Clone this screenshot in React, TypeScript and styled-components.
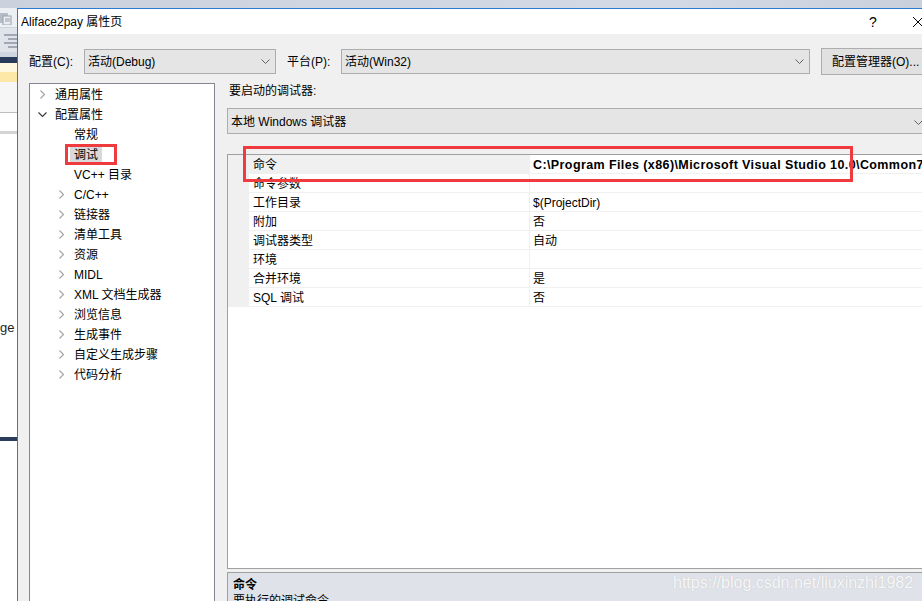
import React from 'react';
import styled, { createGlobalStyle } from 'styled-components';

const GlobalStyle = createGlobalStyle`
  * { box-sizing: border-box; }
  html, body {
    margin: 0;
    padding: 0;
    width: 922px;
    height: 601px;
    overflow: hidden;
    background: #ffffff;
  }
  body {
    font-family: "Liberation Sans", "Noto Sans CJK SC", sans-serif;
    font-size: 12px;
    color: #000;
  }
`;

const Page = styled.div`
  display: grid;
  grid-template-columns: 17px 924px;
  grid-template-rows: 8px 593px;
  width: 922px;
  height: 601px;
  overflow: hidden;
`;

const TopBand = styled.div`
  grid-column: 1 / -1;
  background: linear-gradient(to right, #cbd2de, #d4dae5 70%, #c9d0dc);
`;

/* ---- VS window peeking out on the left ---- */

const LeftStrip = styled.div`
  display: flex;
  flex-direction: column;
  overflow: hidden;
  background: #fff;
`;

const Band = styled.div<{ $h: number; $bg: string }>`
  flex-shrink: 0;
  height: ${(p) => p.$h}px;
  background: ${(p) => p.$bg};
  display: flex;
  align-items: center;
  overflow: hidden;
`;

const StripText = styled.span`
  font-family: "Liberation Sans", sans-serif;
  font-size: 13px;
  line-height: 14px;
  color: #1e1e1e;
`;

/* ---- dialog ---- */

const Dialog = styled.div`
  display: flex;
  flex-direction: column;
  border-top: 1px solid #2b7bd3;
  border-left: 1px solid #2b7bd3;
  background: #f0f0f0;
  overflow: hidden;
`;

const TitleBar = styled.div`
  height: 25px;
  flex-shrink: 0;
  display: flex;
  align-items: center;
  background: #fff;
  padding-left: 3px;
`;

const TitleText = styled.span`
  flex: 1;
  font-size: 12px;
  line-height: 16px;
`;

const TitleButton = styled.div<{ $w: number }>`
  width: ${(p) => p.$w}px;
  height: 25px;
  display: flex;
  align-items: center;
  justify-content: center;
  font-size: 14px;
  color: #000;
`;

const Body = styled.div`
  flex: 1;
  padding: 15px 12px 0 11px;
  display: flex;
  flex-direction: column;
`;

const Toolbar = styled.div`
  height: 25px;
  display: flex;
  align-items: center;
`;

const FieldLabel = styled.span<{ $w: number; $gap?: number }>`
  width: ${(p) => p.$w}px;
  margin-left: ${(p) => p.$gap ?? 0}px;
  flex-shrink: 0;
  line-height: 16px;
`;

const Combo = styled.div<{ $w?: number; $h: number }>`
  ${(p) => (p.$w ? `width: ${p.$w}px; flex-shrink: 0;` : 'flex: 1;')}
  height: ${(p) => p.$h}px;
  display: flex;
  align-items: center;
  padding: 0 5px 0 3px;
  background: #e5e5e5;
  border: 1px solid #adadad;
  line-height: 16px;
`;

const ComboText = styled.span`
  flex: 1;
  white-space: nowrap;
  overflow: hidden;
`;

const Button = styled.div`
  width: 112px;
  height: 27px;
  margin-left: 11px;
  flex-shrink: 0;
  display: flex;
  align-items: center;
  padding-left: 10px;
  background: #e1e1e1;
  border: 1px solid #adadad;
  white-space: nowrap;
  line-height: 16px;
`;

const Main = styled.div`
  margin-top: 9px;
  height: 540px;
  display: flex;
  gap: 12px;
`;

/* ---- tree ---- */

const Tree = styled.div`
  position: relative;
  width: 186px;
  flex-shrink: 0;
  background: #fff;
  border: 1px solid #828790;
`;

const TreeRow = styled.div<{ $depth: number }>`
  height: 20px;
  display: flex;
  align-items: center;
  padding-top: 2px;
  padding-left: ${(p) => (p.$depth ? 27 : 8)}px;
`;

const Expander = styled.span`
  width: 17px;
  flex-shrink: 0;
  display: flex;
  align-items: center;
  margin-top: -1px;
`;

const TreeLabel = styled.span<{ $selected?: boolean }>`
  line-height: 16px;
  padding: 0 4px;
  margin-left: -4px;
  white-space: nowrap;
  background: ${(p) => (p.$selected ? '#d9d9d9' : 'transparent')};
`;

const Annotation = styled.div<{ $l: number; $t: number; $w: number; $h: number }>`
  position: absolute;
  left: ${(p) => p.$l}px;
  top: ${(p) => p.$t}px;
  width: ${(p) => p.$w}px;
  height: ${(p) => p.$h}px;
  border: 3px solid #ef3a3e;
  pointer-events: none;
`;

/* ---- right pane ---- */

const RightPane = styled.div`
  flex: 1;
  min-width: 0;
  display: flex;
  flex-direction: column;
`;

const PaneLabel = styled.div`
  line-height: 14px;
  padding-top: 1px;
  padding-left: 2px;
`;

const DebuggerCombo = styled(Combo)`
  margin-top: 10px;
  flex: none;
  padding-top: 2px;
`;

const Grid = styled.div`
  position: relative;
  margin-top: 20px;
  height: 414px;
  flex-shrink: 0;
  background: #fff;
  border: 1px solid #a0a0a0;
  border-bottom: none;
`;

const PropRow = styled.div`
  display: grid;
  grid-template-columns: 21px 280px 1fr;
  height: 19px;
`;

const Margin = styled.div`
  background: #f0f0f0;
`;

const NameCell = styled.div<{ $selected?: boolean }>`
  padding: 2px 0 0 4px;
  line-height: 17px;
  border-bottom: 1px solid #f0f0f0;
  background: ${(p) => (p.$selected ? '#f0f0f0' : '#fff')};
  white-space: nowrap;
  overflow: hidden;
`;

const ValueCell = styled.div<{ $bold?: boolean }>`
  padding: 2px 0 0 3px;
  line-height: 17px;
  border-left: 1px solid #f0f0f0;
  border-bottom: 1px solid #f0f0f0;
  white-space: nowrap;
  overflow: hidden;
  ${(p) =>
    p.$bold &&
    `
    font-weight: 700;
    font-size: 12.5px;
    letter-spacing: 0.4px;
  `}
`;

const Splitter = styled.div`
  height: 5px;
  flex-shrink: 0;
  background: #f0f0f0;
  border-top: 1px solid #a0a0a0;
  border-bottom: 1px solid #a0a0a0;
`;

const Description = styled.div`
  position: relative;
  flex: 1;
  background: #dfe2e8;
  border-left: 1px solid #a0a0a0;
  padding: 4px 5px 0;
`;

const DescTitle = styled.div`
  font-weight: 700;
  line-height: 16px;
`;

const DescText = styled.div`
  line-height: 16px;
`;

const Watermark = styled.div`
  position: absolute;
  left: 445px;
  top: 1px;
  font-family: "Liberation Sans", sans-serif;
  font-size: 16px;
  line-height: 18px;
  color: rgba(255, 255, 255, 0.9);
  text-shadow: 0 0 1px rgba(120, 120, 130, 0.35);
  white-space: nowrap;
`;

/* ---- icons ---- */

const ChevronRight = () => (
  <svg width="9" height="9" viewBox="0 0 9 9">
    <path d="M2.5 0.5 L6.5 4.5 L2.5 8.5" fill="none" stroke="#a6a6a6" strokeWidth="1.2" />
  </svg>
);

const ChevronDown = () => (
  <svg width="9" height="9" viewBox="0 0 9 9">
    <path d="M0.5 2.5 L4.5 6.5 L8.5 2.5" fill="none" stroke="#3c3c3c" strokeWidth="1.2" />
  </svg>
);

const ComboArrow = () => (
  <svg width="9" height="5" viewBox="0 0 9 5">
    <path d="M0.5 0.5 L4.5 4.5 L8.5 0.5" fill="none" stroke="#606060" strokeWidth="1" />
  </svg>
);

const CloseGlyph = () => (
  <svg width="10" height="10" viewBox="0 0 10 10">
    <path d="M0 0 L10 10 M10 0 L0 10" stroke="#000" strokeWidth="1" />
  </svg>
);

const ClipboardIcon = () => (
  <svg width="14" height="14" viewBox="0 0 14 14">
    <rect x="0" y="2" width="8" height="10" fill="#b7bdc7" />
    <rect x="3" y="5" width="8" height="9" fill="#e9ecf0" stroke="#9aa2ae" strokeWidth="1" />
    <path d="M5 8 H10 M5 10 H10" stroke="#9aa2ae" strokeWidth="1" />
  </svg>
);

const LinesIcon = () => (
  <svg width="17" height="16" viewBox="0 0 17 16">
    <path d="M4 3 H17 M8 7 H17 M4 11 H17 M8 15 H17" stroke="#8c95a3" strokeWidth="1.3" />
  </svg>
);

type TreeItem = { label: string; depth: number; exp?: 'open' | 'closed'; selected?: boolean };

const treeItems: TreeItem[] = [
  { label: '通用属性', depth: 0, exp: 'closed' },
  { label: '配置属性', depth: 0, exp: 'open' },
  { label: '常规', depth: 1 },
  { label: '调试', depth: 1, selected: true },
  { label: 'VC++ 目录', depth: 1 },
  { label: 'C/C++', depth: 1, exp: 'closed' },
  { label: '链接器', depth: 1, exp: 'closed' },
  { label: '清单工具', depth: 1, exp: 'closed' },
  { label: '资源', depth: 1, exp: 'closed' },
  { label: 'MIDL', depth: 1, exp: 'closed' },
  { label: 'XML 文档生成器', depth: 1, exp: 'closed' },
  { label: '浏览信息', depth: 1, exp: 'closed' },
  { label: '生成事件', depth: 1, exp: 'closed' },
  { label: '自定义生成步骤', depth: 1, exp: 'closed' },
  { label: '代码分析', depth: 1, exp: 'closed' },
];

type Prop = { name: string; value: string; bold?: boolean; selected?: boolean };

const props: Prop[] = [
  {
    name: '命令',
    value: 'C:\\Program Files (x86)\\Microsoft Visual Studio 10.0\\Common7\\IDE\\devenv.exe',
    bold: true,
    selected: true,
  },
  { name: '命令参数', value: '' },
  { name: '工作目录', value: '$(ProjectDir)' },
  { name: '附加', value: '否' },
  { name: '调试器类型', value: '自动' },
  { name: '环境', value: '' },
  { name: '合并环境', value: '是' },
  { name: 'SQL 调试', value: '否' },
];

const App: React.FC = () => {
  return (
    <>
      <GlobalStyle />
      <Page>
        <TopBand />
        <LeftStrip>
          <Band $h={19} $bg="#eceff3"><ClipboardIcon /></Band>
          <Band $h={1} $bg="#d0d5dd" />
          <Band $h={24} $bg="#dfe3ea"><LinesIcon /></Band>
          <Band $h={5} $bg="#cfd6e2" />
          <Band $h={6} $bg="#293b5b" />
          <Band $h={9} $bg="#fff8e0" />
          <Band $h={10} $bg="#fde8a8" />
          <Band $h={30} $bg="#f6f6f6" />
          <Band $h={1} $bg="#bdbdbd" />
          <Band $h={18} $bg="#ffffff" />
          <Band $h={3} $bg="#d4d4d4" />
          <Band $h={187} $bg="#ffffff" />
          <Band $h={14} $bg="#ffffff"><StripText>ge</StripText></Band>
          <Band $h={102} $bg="#ffffff" />
          <Band $h={4} $bg="#2c3d5c" />
          <Band $h={170} $bg="#ffffff" />
        </LeftStrip>

        <Dialog>
          <TitleBar>
            <TitleText>Aliface2pay 属性页</TitleText>
            <TitleButton $w={44}>?</TitleButton>
            <TitleButton $w={46}><CloseGlyph /></TitleButton>
          </TitleBar>

          <Body>
            <Toolbar>
              <FieldLabel $w={55}>配置(C):</FieldLabel>
              <Combo $w={192} $h={25}>
                <ComboText>活动(Debug)</ComboText>
                <ComboArrow />
              </Combo>
              <FieldLabel $w={54} $gap={11}>平台(P):</FieldLabel>
              <Combo $w={469} $h={25}>
                <ComboText>活动(Win32)</ComboText>
                <ComboArrow />
              </Combo>
              <Button>配置管理器(O)...</Button>
            </Toolbar>

            <Main>
              <Tree>
                {treeItems.map((it) => (
                  <TreeRow key={it.label} $depth={it.depth}>
                    <Expander>
                      {it.exp === 'closed' && <ChevronRight />}
                      {it.exp === 'open' && <ChevronDown />}
                    </Expander>
                    <TreeLabel $selected={it.selected}>{it.label}</TreeLabel>
                  </TreeRow>
                ))}
                <Annotation $l={35} $t={60} $w={52} $h={21} />
              </Tree>

              <RightPane>
                <PaneLabel>要启动的调试器:</PaneLabel>
                <DebuggerCombo $h={26}>
                  <ComboText>本地 Windows 调试器</ComboText>
                  <ComboArrow />
                </DebuggerCombo>

                <Grid>
                  {props.map((p) => (
                    <PropRow key={p.name}>
                      <Margin />
                      <NameCell $selected={p.selected}>{p.name}</NameCell>
                      <ValueCell $bold={p.bold}>{p.value}</ValueCell>
                    </PropRow>
                  ))}
                  <Annotation $l={15} $t={-9} $w={610} $h={36} />
                </Grid>

                <Splitter />
                <Description>
                  <DescTitle>命令</DescTitle>
                  <DescText>要执行的调试命令。</DescText>
                  <Watermark>https://blog.csdn.net/liuxinzhi1982</Watermark>
                </Description>
              </RightPane>
            </Main>
          </Body>
        </Dialog>
      </Page>
    </>
  );
};

export default App;
